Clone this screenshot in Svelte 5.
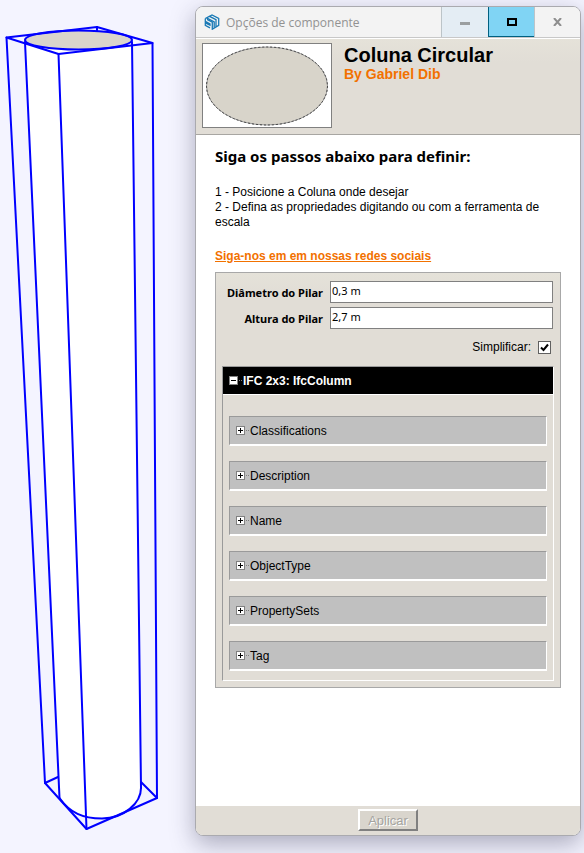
<script>
  let diameter = $state('0,3 m');
  let height = $state('2,7 m');
  let simplify = $state(true);
  let ifcOpen = $state(true);
  let opened = $state({});
  const groups = ['Classifications', 'Description', 'Name', 'ObjectType', 'PropertySets', 'Tag'];
</script>

{#snippet toggle(open)}
  <svg class="toggle" viewBox="0 0 14 9" width="14" height="9" aria-hidden="true" shape-rendering="crispEdges">
    <rect width="9" height="9" fill="#808080" />
    <rect x="1" y="1" width="7" height="7" fill="#fff" />
    <path d="M2 4h5v1H2z" fill="#000" />
    {#if !open}<path d="M4 2h1v5H4z" fill="#000" />{/if}
    <path d="M10 4h1v1h-1zM12 4h1v1h-1z" fill="#808080" />
  </svg>
{/snippet}

<main class="stage">
  <div class="model">
    <svg viewBox="0 0 195 853" width="195" height="853" role="img" aria-label="Coluna">
      <path d="M25 42 L59.500 798 C70 813 83 818.500 102 818.500 C124 818.500 141 803 141 788 L132 42 Z" fill="#fff" />
      <ellipse cx="78.500" cy="40" rx="53.500" ry="9.500" fill="#dad5cc" />
      <g fill="none" stroke="#0000ff" stroke-width="2" stroke-linejoin="round" stroke-linecap="round">
        <path d="M6.500 37.500 L97 27 L152.500 43 L58.500 54 Z" />
        <path d="M97 27V31" />
        <ellipse cx="78.500" cy="40" rx="53.500" ry="9.500" />
        <path d="M6.500 37.500 L45 783 L86.500 829 L157 798 L152.500 43" />
        <path d="M58.500 54 L86.500 829" />
        <path d="M25 42 L59.500 798" />
        <path d="M132 42 L141 788" />
        <path d="M59.500 798 C70 813 83 818.500 102 818.500 C124 818.500 141 803 141 788" />
        <path d="M45 783 L58 777 M141 782 L157 798" />
      </g>
    </svg>
  </div>

  <section class="window" aria-label="Opções de componente">
    <header class="titlebar">
      <svg class="logo" viewBox="0 0 16 16" width="16" height="16" aria-hidden="true">
        <path d="M1.300 4.600 L5.500 2.300 L12 5.700 V12.500 M4.300 3 L8 1 L14.700 4.400 V11.400 L8.300 15.200 V8.200 L3 5.400" fill="none" stroke="#1979b5" stroke-width="1.300" />
        <path d="M3 4.200 L10.200 7.800 V13.800 M1.300 4.600 V7.400 L6 10 V11.200 L1.300 8.800 V11.400 L6 13.900" fill="none" stroke="#1979b5" stroke-width="1.300" />
      </svg>
      <span class="caption">Opções de componente</span>
      <button class="sys min" aria-label="Minimizar">
        <svg viewBox="0 0 10 10" width="10" height="10"><path d="M0 5h10v3H0z" fill="#9b9fa0" /></svg>
      </button>
      <button class="sys max" aria-label="Maximizar">
        <svg viewBox="0 0 10 8" width="10" height="8"><path d="M1 1h8v6H1z" fill="none" stroke="#000" stroke-width="2" /></svg>
      </button>
      <button class="sys close" aria-label="Fechar">
        <svg viewBox="0 0 9 8" width="9" height="8"><path d="M1 0L8 8M8 0L1 8" stroke="#8e8e8e" stroke-width="2" /></svg>
      </button>
    </header>

    <div class="head">
      <div class="thumb">
        <svg viewBox="0 0 128 83" width="128" height="83" aria-hidden="true">
          <ellipse cx="64" cy="42" rx="60.500" ry="39" fill="#d8d4ca" stroke="#999" />
          <ellipse cx="64" cy="42" rx="60.500" ry="39" fill="none" stroke="#444" stroke-dasharray="2 2" />
        </svg>
      </div>
      <div>
        <h1>Coluna Circular</h1>
        <p class="author">By Gabriel Dib</p>
      </div>
    </div>

    <div class="body">
      <h2>Siga os passos abaixo para definir:</h2>
      <p class="steps">1 - Posicione a Coluna onde desejar<br />2 - Defina as propriedades digitando ou com a ferramenta de escala</p>
      <a class="social" href="#redes">Siga-nos em em nossas redes sociais</a>

      <form class="panel" id="options" onsubmit={(e) => e.preventDefault()}>
        <div class="field">
          <label for="diameter">Diâmetro do Pilar</label>
          <input id="diameter" type="text" bind:value={diameter} />
        </div>
        <div class="field">
          <label for="height">Altura do Pilar</label>
          <input id="height" type="text" bind:value={height} />
        </div>
        <div class="check">
          <label for="simplify">Simplificar:</label>
          <span class="tick">
            <input id="simplify" type="checkbox" bind:checked={simplify} />
            {#if simplify}
              <svg viewBox="0 0 13 13" width="13" height="13" aria-hidden="true"><path d="M3 6.500L5.500 9L10 3.500" fill="none" stroke="#000" stroke-width="2" /></svg>
            {/if}
          </span>
        </div>

        <div class="ifc">
          <button type="button" class="ifc-title" aria-expanded={ifcOpen} onclick={() => (ifcOpen = !ifcOpen)}>
            {@render toggle(ifcOpen)}IFC 2x3: IfcColumn
          </button>
          {#if ifcOpen}
            <div class="groups">
              {#each groups as name}
                <button type="button" class="group" aria-expanded={!!opened[name]} onclick={() => (opened[name] = !opened[name])}>
                  {@render toggle(opened[name])}{name}
                </button>
              {/each}
            </div>
          {/if}
        </div>
      </form>
    </div>

    <footer>
      <button class="apply" form="options" disabled>Aplicar</button>
    </footer>
  </section>
</main>

<style>
  :global(body) {
    background: #f4f4ff;
  }
  .stage,
  .stage * {
    box-sizing: border-box;
  }
  .stage {
    display: flex;
    min-height: 100vh;
    overflow: hidden;
    font: 12px/15px "Liberation Sans", Arial, sans-serif;
    color: #000;
  }
  .model {
    flex: none;
    width: 195px;
  }
  .model svg,
  .thumb svg {
    display: block;
  }
  button {
    margin: 0;
    font: inherit;
    color: inherit;
  }
  h1,
  h2,
  p {
    margin: 0;
  }
  .window {
    flex: 1;
    display: flex;
    flex-direction: column;
    margin: 6px 3px 17px 0;
    border: 1px solid #aaaaaf;
    border-radius: 8px;
    overflow: hidden;
    background: #fff;
    box-shadow: 0 8px 24px rgba(40, 40, 70, 0.36);
  }
  .titlebar {
    display: flex;
    align-items: center;
    height: 31px;
    padding-left: 8px;
    background: #f3f3f3;
    border-bottom: 1px solid #c8c8c8;
  }
  .caption {
    flex: 1;
    margin-left: 6px;
    font-family: "Open Sans", "Noto Sans", sans-serif;
    color: #929292;
  }
  .sys {
    display: flex;
    align-items: center;
    justify-content: center;
    align-self: stretch;
    width: 46px;
    padding: 0;
    border: 0;
    border-left: 1px solid #bcc4c8;
    background: none;
  }
  .min {
    width: 47px;
    background: #e4edf4;
  }
  .max {
    background: #80d4f4;
    border-left-color: #006080;
    border-bottom: 1px solid #006080;
  }
  .head {
    display: flex;
    gap: 12px;
    height: 97px;
    padding: 4px 6px;
    border-top: 1px solid #fff;
    border-bottom: 1px solid #a8a6a2;
    background: linear-gradient(#e5e2d9, #e1ddd6 24px);
  }
  .thumb {
    width: 130px;
    height: 85px;
    border: 1px solid #808080;
    background: #fff;
  }
  h1 {
    font-size: 20px;
    line-height: 24px;
  }
  .author {
    font-size: 14px;
    font-weight: bold;
    color: #f27100;
  }
  .body {
    flex: 1;
    padding: 11px 19px;
  }
  h2 {
    font: bold 15px/20px "Noto Sans", "Open Sans", sans-serif;
  }
  .steps {
    margin: 19px 0;
  }
  .social {
    display: block;
    font-weight: bold;
    color: #f27100;
  }
  .panel {
    margin-top: 8px;
    padding: 8px 6px 6px;
    border: 1px solid #a8a8a8;
    background: linear-gradient(#e5e2d9, #e1ddd6 24px);
  }
  .field {
    display: flex;
    align-items: center;
    gap: 7px;
    margin: 0 1px 4px 0;
  }
  .field label {
    width: 101px;
    text-align: right;
    font: bold 11px/15px "Noto Sans", "Open Sans", sans-serif;
  }
  .field input {
    flex: 1;
    min-width: 0;
    height: 22px;
    padding: 0 1px 4px;
    border: 1px solid #808080;
    border-radius: 0;
    background: #fff;
    font: 11px/15px "Noto Sans", "Open Sans", sans-serif;
    color: #000;
  }
  .check {
    display: flex;
    align-items: center;
    justify-content: flex-end;
    gap: 7px;
    margin: 12px 3px;
    height: 13px;
  }
  .tick {
    position: relative;
    width: 13px;
    height: 13px;
  }
  .tick input {
    appearance: none;
    display: block;
    width: 13px;
    height: 13px;
    margin: 0;
    border: 1px solid #606060;
    background: #fff;
  }
  .tick svg {
    position: absolute;
    inset: 0;
    pointer-events: none;
  }
  .ifc {
    border: 1px solid;
    border-color: #9a9a9a #fff #fff #9a9a9a;
  }
  .ifc-title,
  .group {
    display: flex;
    align-items: center;
    width: 100%;
    padding: 0 6px;
    line-height: 16px;
    text-align: left;
    border-radius: 0;
  }
  .ifc-title {
    height: 28px;
    border: 0;
    border-bottom: 1px solid #fff;
    background: #000;
    color: #fff;
    font-weight: bold;
  }
  .groups {
    display: flex;
    flex-direction: column;
    gap: 15px;
    padding: 21px 6px 9px;
  }
  .group {
    height: 30px;
    border: 1px solid;
    border-color: #9a9a9a #fff #fff #9a9a9a;
    border-bottom-width: 2px;
    background: #c0c0c0;
  }
  .toggle {
    flex: none;
  }
  footer {
    display: flex;
    justify-content: center;
    padding: 3px 0 4px;
    background: #e1ddd6;
  }
  .apply {
    width: 60px;
    height: 22px;
    padding: 0;
    border: 2px solid;
    border-color: #fff #808080 #808080 #fff;
    border-radius: 0;
    background: #d9d5cd;
    color: #a5a4a0;
    text-shadow: 1px 1px #fff;
    font-size: 13px;
  }
</style>
